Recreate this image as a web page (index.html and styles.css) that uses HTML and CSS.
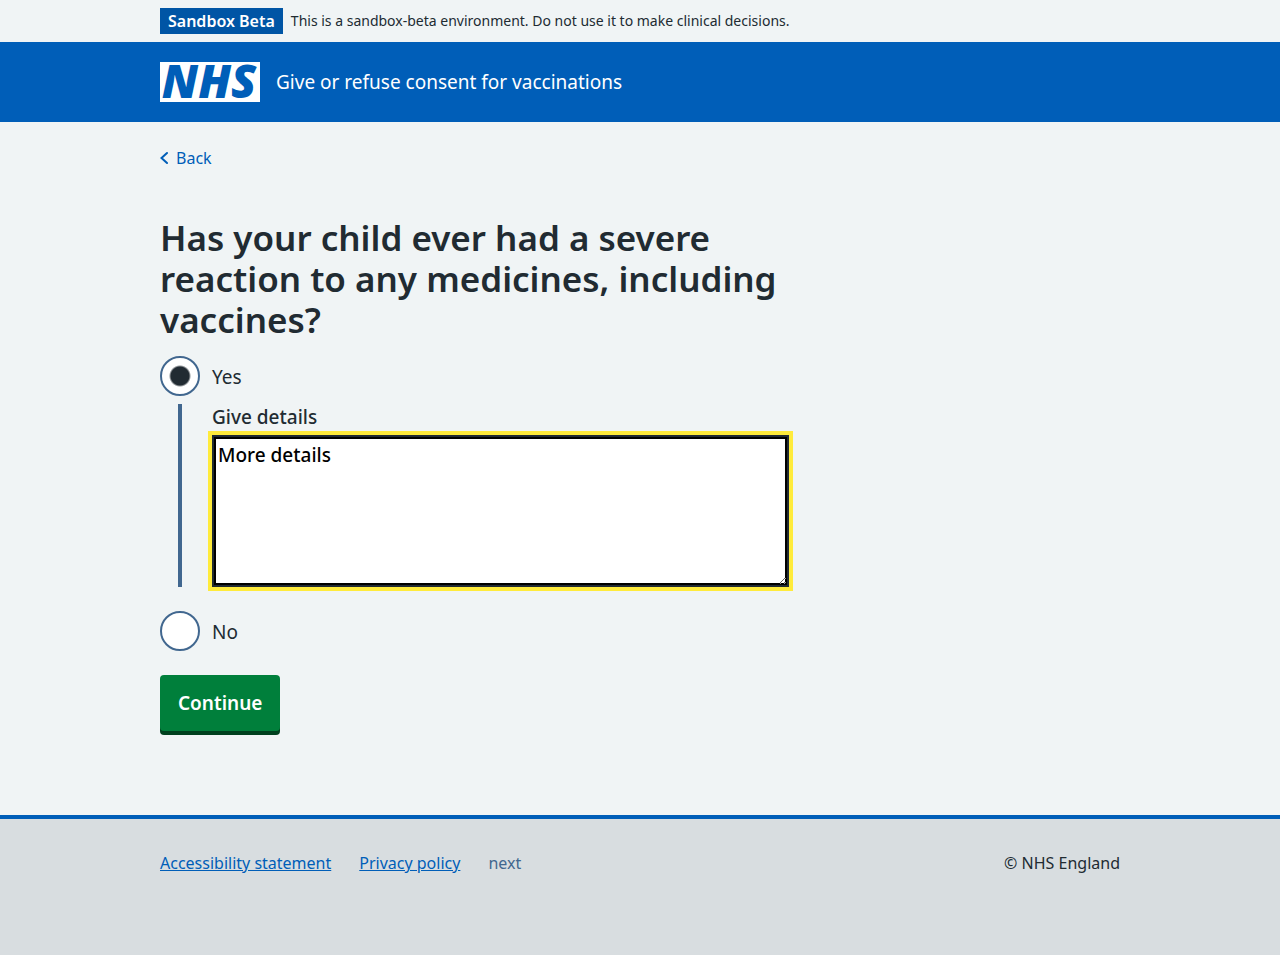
FILE: index.html
```html
<!DOCTYPE html>
<html lang="en">
<head>
<meta charset="utf-8">
<meta name="viewport" content="width=device-width, initial-scale=1">
<title>Give or refuse consent for vaccinations</title>
<link rel="stylesheet" href="styles.css">
</head>
<body>
<div class="environment">
  <div class="container environment-inner">
    <strong class="tag">Sandbox Beta</strong>
    <span>This is a sandbox-beta environment. Do not use it to make clinical decisions.</span>
  </div>
</div>
<header class="header">
  <div class="container header-inner">
    <svg class="logo" viewBox="0 0 100 40" role="img" aria-label="NHS">
      <rect width="100" height="40" fill="#fff"/>
      <text class="logo-text" x="49" y="36" text-anchor="middle">NHS</text>
    </svg>
    <span class="service">Give or refuse consent for vaccinations</span>
  </div>
</header>
<main class="container main">
  <a class="back" href="#">
    <svg class="chevron" viewBox="0 0 8 14" aria-hidden="true"><path d="M7 2 L1.5 7 L7 12" fill="none" stroke="currentColor" stroke-width="2" stroke-linecap="round"/></svg>
    Back
  </a>
  <form class="form">
    <fieldset class="fieldset">
      <legend class="legend"><h1 class="heading">Has your child ever had a severe reaction to any medicines, including vaccines?</h1></legend>
      <div class="choice">
        <input class="radio" type="radio" id="yes" name="reaction" checked>
        <label class="choice-label" for="yes">Yes</label>
      </div>
      <div class="conditional">
        <label class="details-label" for="details">Give details</label>
        <textarea class="details" id="details" rows="5">More details</textarea>
      </div>
      <div class="choice">
        <input class="radio" type="radio" id="no" name="reaction">
        <label class="choice-label" for="no">No</label>
      </div>
    </fieldset>
    <button class="button" type="button">Continue</button>
  </form>
</main>
<footer class="footer">
  <div class="container footer-inner">
    <nav class="footer-links">
      <a class="footer-link" href="#">Accessibility statement</a>
      <a class="footer-link" href="#">Privacy policy</a>
      <span class="release">next</span>
    </nav>
    <span>© NHS England</span>
  </div>
</footer>
</body>
</html>
```
FILE: styles.css
```css
* { box-sizing: border-box; }

body {
  display: flex;
  flex-direction: column;
  min-height: 100vh;
  margin: 0;
  background: #f0f4f5;
  color: #212b32;
  font-family: "Noto Sans", "Open Sans", sans-serif;
  font-size: 19px;
  line-height: 28px;
}

.container {
  width: 100%;
  max-width: 1024px;
  margin: 0 auto;
  padding: 0 32px;
}

.environment { padding: 8px 0; font-size: 14px; line-height: 26px; }
.environment-inner { display: flex; gap: 8px; }
.tag {
  flex: none;
  padding: 0 8px;
  background: #0055a5;
  color: #fff;
  font-size: 16px;
  font-weight: 600;
}

.header { background: #005eb8; color: #fff; }
.header-inner {
  display: flex;
  align-items: center;
  gap: 16px;
  padding-top: 20px;
  padding-bottom: 20px;
}
.logo { flex: none; width: 100px; height: 40px; overflow: visible; }
.logo-text {
  fill: #005eb8;
  font-family: "Open Sans", sans-serif;
  font-size: 46px;
  font-style: italic;
  font-weight: 800;
}

.main { padding-top: 24px; padding-bottom: 80px; }
.back {
  display: flex;
  align-items: center;
  gap: 8px;
  width: fit-content;
  color: #005eb8;
  font-size: 16px;
  line-height: 24px;
  text-decoration: none;
}
.chevron { width: 8px; height: 14px; }

.form { max-width: 640px; margin-top: 47px; }
.fieldset { min-width: 0; margin: 0; padding: 0; border: 0; }
.legend { padding: 0; margin-bottom: 16px; }
.heading { margin: 0; font-size: 35px; font-weight: 600; line-height: 41px; }

.choice { display: flex; gap: 12px; }
.radio {
  appearance: none;
  flex: none;
  width: 40px;
  height: 40px;
  margin: 0;
  border: 2px solid #41678f;
  border-radius: 50%;
  background: #fff;
}
.radio:checked {
  background: radial-gradient(circle, #212b32 0 9px, #fff 11px);
}
.choice-label { padding: 7px 0 5px; }

.conditional {
  margin: 8px 11px 24px 18px;
  padding-left: 30px;
  border-left: 4px solid #41678f;
}
.details-label { display: block; margin-bottom: 4px; font-weight: 500; line-height: 27px; }
.details {
  display: block;
  width: 100%;
  height: 152px;
  margin: 0;
  padding: 4px;
  border: 2px solid #212b32;
  border-radius: 0;
  outline: 4px solid #ffeb3b;
  box-shadow: inset 0 0 0 2px #000;
  background: #fff;
  color: #000;
  font: inherit;
  font-weight: 500;
  resize: vertical;
}

.button {
  display: block;
  margin: 24px 0 4px;
  padding: 14px 18px;
  border: 0;
  border-radius: 4px;
  background: #007f3b;
  box-shadow: 0 4px 0 #00401e;
  color: #fff;
  font: inherit;
  font-weight: 600;
}

.footer {
  flex: 1;
  padding: 32px 0;
  border-top: 4px solid #005eb8;
  background: #d8dde0;
  font-size: 16px;
  line-height: 24px;
}
.footer-inner { display: flex; justify-content: space-between; gap: 28px; }
.footer-links { display: flex; flex-wrap: wrap; gap: 28px; }
.footer-link { color: #005eb8; }
.release { color: #41678f; }
```
